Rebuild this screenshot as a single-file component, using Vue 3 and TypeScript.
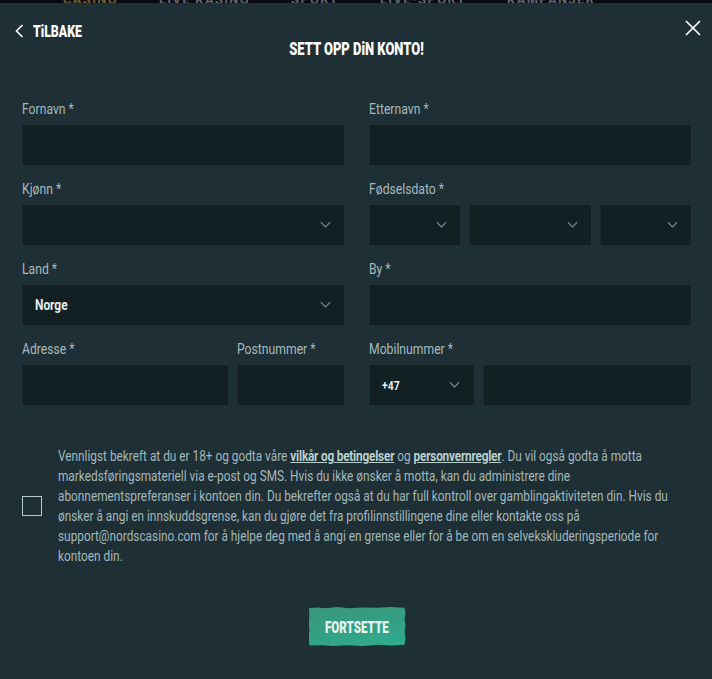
<script setup lang="ts">
const nav: string[] = ['CASINO', 'LIVE KASINO', 'SPORT', 'LIVE-SPORT', 'KAMPANJER']
</script>

<template>
  <div class="page">
    <div class="topbar">
      <span v-for="(n, i) in nav" :key="n" class="navitem" :class="{ first: i === 0 }">{{ n }}</span>
    </div>
    <main class="modal">
      <button class="close" aria-label="Lukk">
        <svg width="16" height="16" viewBox="0 0 16 16"><path d="M1 1 15 15M15 1 1 15" stroke="#fff" stroke-width="1.7" fill="none" /></svg>
      </button>
      <a class="back">
        <svg width="9" height="14" viewBox="0 0 9 14"><path d="M7.5 1 1.5 7l6 6" stroke="#fff" stroke-width="1.6" fill="none" /></svg>
        <span>TiLBAKE</span>
      </a>
      <h1 class="title"><span>SETT OPP DiN KONTO!</span></h1>

      <form class="form" @submit.prevent>
        <div class="field"><label>Fornavn *</label><input class="box" /></div>
        <div class="field"><label>Etternavn *</label><input class="box" /></div>

        <div class="field"><label>Kjønn *</label>
          <div class="box select"><span></span><svg class="chev" viewBox="0 0 12 8"><path d="M1 1l5 5 5-5" /></svg></div>
        </div>
        <div class="field"><label>Fødselsdato *</label>
          <div class="row date">
            <div class="box select"><span></span><svg class="chev" viewBox="0 0 12 8"><path d="M1 1l5 5 5-5" /></svg></div>
            <div class="box select"><span></span><svg class="chev" viewBox="0 0 12 8"><path d="M1 1l5 5 5-5" /></svg></div>
            <div class="box select"><span></span><svg class="chev" viewBox="0 0 12 8"><path d="M1 1l5 5 5-5" /></svg></div>
          </div>
        </div>

        <div class="field"><label>Land *</label>
          <div class="box select"><span class="value">Norge</span><svg class="chev" viewBox="0 0 12 8"><path d="M1 1l5 5 5-5" /></svg></div>
        </div>
        <div class="field"><label>By *</label><input class="box" /></div>

        <div class="row addr">
          <div class="field"><label>Adresse *</label><input class="box" /></div>
          <div class="field"><label>Postnummer *</label><input class="box" /></div>
        </div>
        <div class="field"><label>Mobilnummer *</label>
          <div class="row phone">
            <div class="box select small"><span class="value">+47</span><svg class="chev" viewBox="0 0 12 8"><path d="M1 1l5 5 5-5" /></svg></div>
            <input class="box" />
          </div>
        </div>
      </form>

      <section class="consent">
        <span class="check"></span>
        <p>
          Vennligst bekreft at du er 18+ og godta våre <a>vilkår og betingelser</a> og <a>personvernregler</a>. Du vil også godta å motta<br />
          markedsføringsmateriell via e-post og SMS. Hvis du ikke ønsker å motta, kan du administrere dine<br />
          abonnementspreferanser i kontoen din. Du bekrefter også at du har full kontroll over gamblingaktiviteten din. Hvis du<br />
          ønsker å angi en innskuddsgrense, kan du gjøre det fra profilinnstillingene dine eller kontakte oss på<br />
          support@nordscasino.com for å hjelpe deg med å angi en grense eller for å be om en selvekskluderingsperiode for<br />
          kontoen din.
        </p>
      </section>

      <div class="actions"><button class="cta"><span>FORTSETTE</span></button></div>
    </main>
  </div>
</template>

<style>
html, body { margin: 0; background: #1f2f36; }
</style>

<style scoped>
.page {
  width: 712px;
  height: 679px;
  overflow: hidden;
  font-family: Roboto, "Noto Sans", sans-serif;
  background: #1f2f36;
}
.topbar {
  height: 3px;
  overflow: hidden;
  background: #090a14;
  display: flex;
  gap: 41px;
  padding-left: 63px;
  line-height: 0;
  font-size: 13px;
  font-weight: 700;
  letter-spacing: 1.3px;
  color: #5f666c;
}
.navitem.first { color: #6f5f2e; }
.modal { position: relative; padding: 19px 21px 0 22px; }
.close {
  position: absolute;
  top: 17px;
  right: 11px;
  padding: 0;
  border: 0;
  background: none;
  display: flex;
}
.back {
  display: flex;
  align-items: center;
  gap: 9px;
  height: 18px;
  margin-left: -7px;
  color: #fff;
  font-size: 16px;
  font-weight: 900;
}
.back span {
  display: inline-block;
  transform: scaleX(0.77);
  transform-origin: left center;
}
.title {
  margin: 0;
  height: 18px;
  text-align: center;
  color: #fff;
  font-size: 18px;
  line-height: 18px;
  font-weight: 900;
}
.title span {
  display: inline-block;
  transform: scaleX(0.72);
}
.form {
  margin-top: 43px;
  display: grid;
  grid-template-columns: 322px 322px;
  column-gap: 25px;
}
.field { display: flex; flex-direction: column; height: 80px; min-width: 0; }
label {
  box-sizing: border-box;
  height: 24px;
  padding-top: 1px;
  line-height: 15px;
  font-size: 14px;
  color: #a5babd;
  align-self: flex-start;
  white-space: nowrap;
  transform: scaleX(0.87);
  transform-origin: left center;
}
.box {
  box-sizing: border-box;
  width: 100%;
  height: 40px;
  border: 0;
  border-left: 1px solid #1c2a30;
  border-radius: 0;
  outline: 0;
  background: #122023;
  color: #fff;
  display: block;
}
.select {
  display: flex;
  align-items: center;
  justify-content: space-between;
  padding: 0 13px 0 12px;
}
.select.small { padding: 0 14px 0 12px; }
.value {
  font-size: 14px;
  font-weight: 700;
  color: #e6eeee;
  display: inline-block;
  transform: scaleX(0.85);
  transform-origin: left center;
}
.small .value { font-size: 13px; transform: scaleX(0.8); }
.chev {
  width: 11px;
  height: 8px;
  fill: none;
  stroke: #71868a;
  stroke-width: 1.4;
}
.row { display: grid; min-width: 0; }
.date { grid-template-columns: 91px 122px 91px; column-gap: 9px; }
.addr { grid-template-columns: 206px 107px; column-gap: 9px; }
.phone { grid-template-columns: 105px 208px; column-gap: 9px; }
.consent {
  margin-top: 25px;
  display: flex;
  align-items: center;
  gap: 16px;
  overflow: hidden;
}
.check {
  flex: none;
  width: 20px;
  height: 20px;
  box-sizing: border-box;
  border: 1px solid #b9cccc;
}
.consent p {
  margin: 0;
  font-size: 14px;
  line-height: 20px;
  color: #a3b8b9;
  white-space: nowrap;
  transform: scaleX(0.845);
  transform-origin: left center;
}
.consent a {
  font-weight: 700;
  letter-spacing: -0.25px;
  text-decoration: underline;
  color: #b9d1cd;
}
.actions { margin-top: 41px; display: flex; justify-content: center; padding-left: 1px; }
.cta {
  width: 97px;
  height: 39px;
  border: 0;
  padding: 0;
  color: #e9f7f2;
  font-family: inherit;
  font-size: 17px;
  font-weight: 900;
  background: linear-gradient(170deg, #3a957a 0%, #32a285 60%, #2fae93 100%);
  clip-path: polygon(0 3%, 9% 1%, 18% 3%, 30% 0, 42% 3%, 56% 1%, 70% 2%, 85% 0, 99% 2%, 100% 16%, 99% 30%, 100% 47%, 99% 62%, 100% 80%, 99% 97%, 86% 99%, 72% 97%, 56% 100%, 40% 98%, 25% 100%, 14% 98%, 1% 99%, 0 80%, 1% 60%, 0 42%, 1% 22%);
}
.cta span { display: inline-block; transform: scaleX(0.68); }
</style>
